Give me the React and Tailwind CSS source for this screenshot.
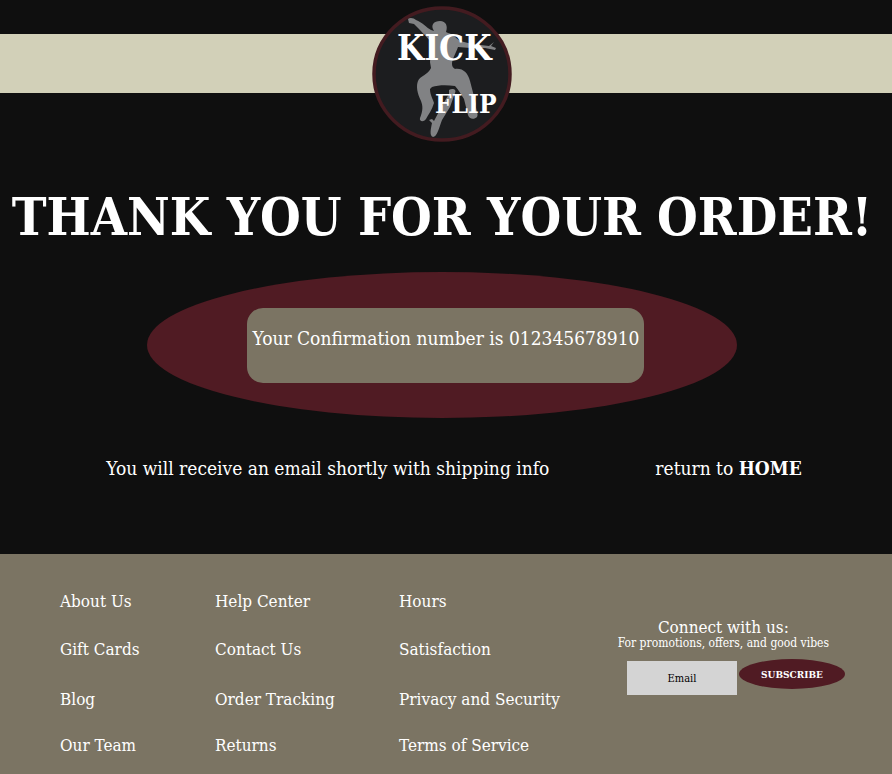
const linkRows = [
  ["About Us", "Help Center", "Hours"],
  ["Gift Cards", "Contact Us", "Satisfaction"],
  ["Blog", "Order Tracking", "Privacy and Security"],
  ["Our Team", "Returns", "Terms of Service"],
];

function Logo() {
  return (
    <a href="#home" aria-label="Kick Flip home" className="block h-[136px] w-[140px]">
      <svg viewBox="0 0 140 136" className="h-full w-full">
        <ellipse cx="70" cy="68" rx="68" ry="66" fill="#1c1d1f" stroke="#431b20" strokeWidth="3.5" />
        <g fill="#818284">
          <path d="M36 13 C38 11 42 12 44 14 C50 16 55 22 59 24 L62 25 C58 19 62 15 68 15 C74 15 76 20 74 26 L76 27 C81 28 84 32 88 35 C99 38 109 39 117 40 L122 36 L119 40 L124 42 L123 44 L113 42 C103 42 94 42 86 41 C84 47 80 53 80 58 C80 60 81 62 83 63 C91 62 96 67 98 75 L104 98 C103 103 107 108 105 111 C102 114 97 113 96 109 L92 93 C89 89 87 84 83 80 C75 79 66 79 60 81 L58 83 C58 89 61 93 62 97 C60 104 56 109 54 113 C51 117 47 115 48 112 C51 105 51 100 49 95 C45 87 44 80 46 75 C48 70 56 69 59 62 L58 56 C59 47 59 41 60 37 C54 30 48 24 42 18 L37 17 Z" />
          <path d="M77 84 C80 82 85 83 83 87 L78 101 L70 114 C67 122 65 131 61 131 C57 130 59 122 60 117 L57 114 L60 113 L62 115 L71 98 L77 88 Z" />
        </g>
        <g
          fill="#ffffff"
          fontWeight="700"
          className="font-['DejaVu_Serif_Condensed','DejaVu_Serif',serif]"
        >
          <text x="25" y="54" fontSize="35">KICK</text>
          <text x="63" y="107" fontSize="26">FLIP</text>
        </g>
      </svg>
    </a>
  );
}

export default function App() {
  return (
    <div className="flex min-h-screen flex-col bg-[#0f0f0f] font-['DejaVu_Serif_Condensed','DejaVu_Serif',serif] text-white">
      <header className="pt-[34px]">
        <div className="relative h-[59px] bg-[#d2d0b8]">
          <div className="absolute inset-x-0 -top-7 flex justify-center pr-2">
            <Logo />
          </div>
        </div>
      </header>

      <main className="flex grow flex-col items-center pt-[92px] pr-2 pb-[72px]">
        <h1 className="text-center text-[52px] leading-[64px] font-bold whitespace-nowrap">
          THANK YOU FOR YOUR ORDER!
        </h1>

        <section className="mt-[23px] flex h-[146px] w-2/3 justify-center rounded-[50%] bg-[#501b23] pt-9 pl-2">
          <p className="h-[75px] w-[397px] rounded-2xl bg-[#7b7463] pt-[18px] text-center text-[19px] leading-6 whitespace-nowrap">
            Your Confirmation number is 012345678910
          </p>
        </section>

        <div className="mt-[38px] flex gap-[106px] pl-6 text-[19px] leading-6 whitespace-nowrap">
          <p>You will receive an email shortly with shipping info</p>
          <p>
            return to <a href="#home" className="font-bold">HOME</a>
          </p>
        </div>
      </main>

      <footer className="flex justify-between bg-[#7b7463] pt-[23px] pr-[47px] pb-[9px] pl-[60px]">
        <nav
          aria-label="Footer"
          className="grid grid-cols-[155px_184px_auto] grid-rows-[48px_48px_52px_40px] items-center text-[17px] leading-6 whitespace-nowrap"
        >
          {linkRows.flat().map((label) => (
            <a key={label} href="#footer">{label}</a>
          ))}
        </nav>

        <form className="flex flex-col items-end pt-10" onSubmit={(e) => e.preventDefault()}>
          <div className="flex w-full flex-col items-center pr-4 text-center whitespace-nowrap">
            <h2 className="text-[17px] leading-5">Connect with us:</h2>
            <p className="text-[12px] leading-3">For promotions, offers, and good vibes</p>
          </div>
          <div className="mt-[10px] flex items-start gap-0.5">
            <input
              type="email"
              aria-label="Email"
              placeholder="Email"
              className="mt-0.5 h-[34px] w-[110px] bg-[#d4d4d4] text-center text-[11px] text-black placeholder:text-black"
            />
            <button
              type="submit"
              className="h-[30px] w-[106px] rounded-[50%] bg-[#501b23] text-[10px] font-bold"
            >
              SUBSCRIBE
            </button>
          </div>
        </form>
      </footer>
    </div>
  );
}
